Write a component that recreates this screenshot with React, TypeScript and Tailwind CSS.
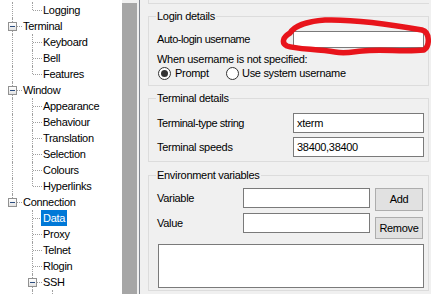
import React from "react";

type TreeRow = {
  label: string;
  level: number;
  guides: boolean[];
  box?: boolean;
  last?: boolean;
  selected?: boolean;
};

const rows: TreeRow[] = [
  { label: "Logging", level: 1, guides: [true], last: true },
  { label: "Terminal", level: 0, guides: [], box: true },
  { label: "Keyboard", level: 1, guides: [true] },
  { label: "Bell", level: 1, guides: [true] },
  { label: "Features", level: 1, guides: [true], last: true },
  { label: "Window", level: 0, guides: [], box: true },
  { label: "Appearance", level: 1, guides: [true] },
  { label: "Behaviour", level: 1, guides: [true] },
  { label: "Translation", level: 1, guides: [true] },
  { label: "Selection", level: 1, guides: [true] },
  { label: "Colours", level: 1, guides: [true] },
  { label: "Hyperlinks", level: 1, guides: [true], last: true },
  { label: "Connection", level: 0, guides: [], box: true, last: true },
  { label: "Data", level: 1, guides: [false], selected: true },
  { label: "Proxy", level: 1, guides: [false] },
  { label: "Telnet", level: 1, guides: [false] },
  { label: "Rlogin", level: 1, guides: [false] },
  { label: "SSH", level: 1, guides: [false], box: true },
  // next row only peeks in at the bottom edge, lines only
  { label: "", level: 2, guides: [false, true] },
];

function Row({ row }: { row: TreeRow }) {
  const c = 12 + 20 * row.level;
  return (
    <div className="relative h-[16px]">
      {row.guides.map((g, i) =>
        g ? (
          <span
            key={i}
            className="absolute top-0 h-[16px] border-l border-dotted border-[#a0a0a0]"
            style={{ left: 12 + 20 * i }}
          />
        ) : null,
      )}
      <span
        className="absolute top-0 border-l border-dotted border-[#a0a0a0]"
        style={{ left: c, height: row.last ? 8 : 16 }}
      />
      <span
        className="absolute top-[8px] border-t border-dotted border-[#a0a0a0]"
        style={{ left: c + 1, width: 9 }}
      />
      {row.box && (
        <span
          className="absolute top-[4px] flex h-[9px] w-[9px] items-center justify-center border border-[#919191] bg-gradient-to-b from-white to-[#e2e2e2]"
          style={{ left: c - 4 }}
        >
          <span className="h-px w-[5px] bg-[#2b4c7e]" />
        </span>
      )}
      {row.label && (
        <span
          className={
            row.selected
              ? "absolute top-0 bg-[#0078d7] px-[2px] leading-[16px] text-white"
              : "absolute top-0 px-[2px] leading-[16px] text-black"
          }
          style={{ left: c + 9 }}
        >
          {row.label}
        </span>
      )}
    </div>
  );
}

function Radio({ checked }: { checked?: boolean }) {
  return (
    <span className="flex h-[13px] w-[13px] items-center justify-center rounded-full border border-[#333] bg-white">
      {checked && <span className="h-[7px] w-[7px] rounded-full bg-[#333]" />}
    </span>
  );
}

function Group({ title, className, children }: { title: string; className: string; children: React.ReactNode }) {
  return (
    <div className={"relative shrink-0 border border-[#dcdcdc] pl-[8px] " + className}>
      <span className="absolute -top-[8px] left-[7px] bg-[#f0f0f0] px-px leading-[14px]">{title}</span>
      {children}
    </div>
  );
}

export default function App() {
  return (
    <div className="relative flex h-[294px] w-[431px] overflow-hidden bg-[#f0f0f0] font-['Liberation_Sans',Arial,sans-serif] text-[11px] tracking-[-0.3px] text-black">
      <div className="w-[122px] shrink-0 bg-white pt-[2px]">
        {rows.map((r, i) => (
          <Row key={i} row={r} />
        ))}
      </div>
      <div className="flex w-[17px] shrink-0 flex-col bg-[#f0f0f0] pt-[3px]">
        <div className="w-[15px] flex-1 bg-[#a6a6a6]" />
      </div>
      <div className="w-px shrink-0 bg-[#828790]" />

      <div className="flex flex-1 flex-col pl-[8px] pr-[2px]">
        <div className="h-[4px] shrink-0 border-b border-l border-[#dcdcdc]" />

        <Group title="Login details" className="mt-[12px] h-[70px]">
          <div className="mt-[14px] flex h-[17px] items-center">
            <span className="flex-1 tracking-[-0.45px]">Auto-login username</span>
            <span className="mr-[4px] h-[17px] w-[131px] border border-[#7a7a7a] bg-white" />
          </div>
          <div className="mt-[4px] leading-[14px]">When username is not specified:</div>
          <div className="flex h-[14px] items-center">
            <span className="ml-[1px] flex w-[68px] items-center gap-[4px]">
              <Radio checked />
              Prompt
            </span>
            <span className="flex items-center gap-[3px]">
              <Radio />
              Use system username
            </span>
          </div>
        </Group>

        <Group title="Terminal details" className="mt-[12px] h-[64px]">
          <div className="mt-[14px] flex h-[20px] items-center">
            <span className="flex-1 tracking-[-0.45px]">Terminal-type string</span>
            <span className="mr-[4px] h-[20px] w-[131px] border border-[#7a7a7a] bg-white pl-[3px] leading-[18px]">xterm</span>
          </div>
          <div className="mt-[4px] flex h-[20px] items-center">
            <span className="flex-1">Terminal speeds</span>
            <span className="mr-[4px] h-[20px] w-[131px] border border-[#7a7a7a] bg-white pl-[3px] leading-[18px]">38400,38400</span>
          </div>
        </Group>

        <Group title="Environment variables" className="mt-[13px] h-[116px]">
          <div className="mt-[12px] flex h-[23px] items-start">
            <span className="flex-1 leading-[21px]">Variable</span>
            <span className="h-[20px] w-[127px] border border-[#7a7a7a] bg-white" />
            <span className="mr-[5px] ml-[5px] flex h-[23px] w-[48px] items-center justify-center border border-[#adadad] bg-[#e1e1e1]">
              Add
            </span>
          </div>
          <div className="mt-[2px] flex h-[26px] items-start">
            <span className="flex-1 leading-[20px]">Value</span>
            <span className="h-[20px] w-[127px] border border-[#7a7a7a] bg-white" />
            <span className="mt-[4px] mr-[5px] ml-[5px] flex h-[22px] w-[48px] items-center justify-center border border-[#adadad] bg-[#e1e1e1]">
              Remove
            </span>
          </div>
          <div className="mt-[5px] mr-[4px] ml-[1px] h-[44px] border border-[#7a7a7a] bg-white" />
        </Group>
      </div>

      <svg className="pointer-events-none absolute top-0 left-0" width="431" height="294" viewBox="0 0 431 294">
        <path
          d="M290 33 C295 25 310 21 325 20 C360 19 400 26 422 30 C430 32 430 46 424 50 C405 52 380 49 362 51 C352 52 345 54 335 52 C315 49 295 49 287 46 C281 43 283 37 290 33 Z"
          fill="none"
          stroke="#e8141b"
          strokeWidth="5.5"
          strokeLinecap="round"
          strokeLinejoin="round"
        />
      </svg>
    </div>
  );
}
